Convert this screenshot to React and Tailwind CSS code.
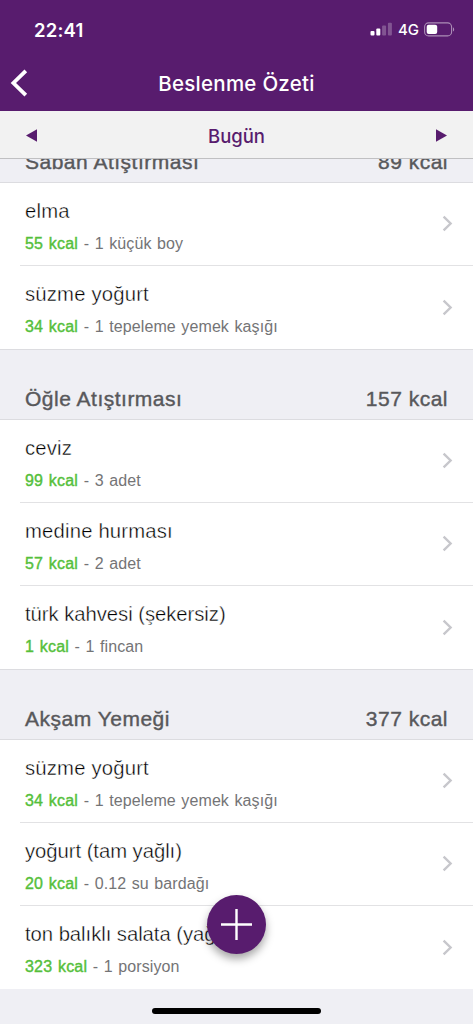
import React from "react";

const sections = [
  {
    name: "Sabah Atıştırması",
    total: "89 kcal",
    items: [
      { name: "elma", kcal: "55 kcal", amount: "1 küçük boy" },
      { name: "süzme yoğurt", kcal: "34 kcal", amount: "1 tepeleme yemek kaşığı" },
    ],
  },
  {
    name: "Öğle Atıştırması",
    total: "157 kcal",
    items: [
      { name: "ceviz", kcal: "99 kcal", amount: "3 adet" },
      { name: "medine hurması", kcal: "57 kcal", amount: "2 adet" },
      { name: "türk kahvesi (şekersiz)", kcal: "1 kcal", amount: "1 fincan" },
    ],
  },
  {
    name: "Akşam Yemeği",
    total: "377 kcal",
    items: [
      { name: "süzme yoğurt", kcal: "34 kcal", amount: "1 tepeleme yemek kaşığı" },
      { name: "yoğurt (tam yağlı)", kcal: "20 kcal", amount: "0.12 su bardağı" },
      { name: "ton balıklı salata (yağsız)", kcal: "323 kcal", amount: "1 porsiyon" },
    ],
  },
];

function StatusBar() {
  return (
    <div className="flex h-[58px] items-center justify-between pl-[34px] pr-[18px] text-white">
      <span className="pt-px font-['Inter',sans-serif] text-[18.5px] leading-6 font-semibold tracking-[0.2px]">22:41</span>
      <div className="flex items-center">
        <svg width="23" height="14" viewBox="0 0 23 14" fill="#fff">
          <rect x="0.5" y="9" width="4" height="4.5" rx="1" />
          <rect x="6.3" y="6.5" width="4" height="7" rx="1" />
          <rect x="12.1" y="3.5" width="4" height="10" rx="1" opacity="0.25" />
          <rect x="17.9" y="0.8" width="4" height="12.7" rx="1" opacity="0.25" />
        </svg>
        <span className="ml-[5px] w-[21px] pt-px font-['Inter',sans-serif] text-[15px] leading-5 font-medium tracking-[-0.2px]">4G</span>
        <svg className="ml-[5px]" width="31" height="15" viewBox="0 0 31 15" fill="none">
          <rect x="0.6" y="0.9" width="27" height="13" rx="4" stroke="#fff" strokeOpacity="0.5" strokeWidth="1.1" />
          <rect x="2.7" y="2.7" width="10.5" height="9.4" rx="2" fill="#fff" />
          <path d="M29 5.2c1.6.7 1.6 3.7 0 4.4z" fill="#fff" fillOpacity="0.5" />
        </svg>
      </div>
    </div>
  );
}

function NavBar() {
  return (
    <div className="grid h-[53px] grid-cols-[60px_1fr_60px] items-center pb-[3px]">
      <svg className="ml-[10px]" width="18" height="28" viewBox="0 0 18 28" fill="none" stroke="#fff" strokeWidth="3.8">
        <path d="M15.8 1.8 3.4 14l12.4 12.2" />
      </svg>
      <h1 className="pt-[2px] text-center font-['Inter',sans-serif] text-[20.5px] leading-7 font-medium tracking-[0.25px] whitespace-nowrap text-white">
        Beslenme Özeti
      </h1>
    </div>
  );
}

function DateBar() {
  return (
    <div className="flex h-12 items-center justify-between border-b border-[#c0c0c2] bg-[#f2f2f2] pr-[26px] pl-[26px]">
      <svg className="mt-px" width="11" height="13" viewBox="0 0 11 13" fill="#581c6e">
        <path d="M0 6.5 11 .3v12.4z" />
      </svg>
      <span className="pt-[2px] font-['Inter',sans-serif] text-[18.5px] leading-6 font-medium text-[#581c6e]">Bugün</span>
      <svg className="mt-px" width="11" height="13" viewBox="0 0 11 13" fill="#581c6e">
        <path d="M11 6.5 0 .3v12.4z" />
      </svg>
    </div>
  );
}

function SectionHeader({ name, total, clipped }) {
  return (
    <div
      className={`flex items-end justify-between overflow-hidden border-b border-[#dcdce0] bg-[#efeff4] pr-[25px] pb-[6px] pl-[25px] text-[21px] leading-7 text-[#58585b] [-webkit-text-stroke:0.4px_#58585b] ${
        clipped ? "h-6" : "h-[71px] border-t"
      }`}
    >
      <h2 className="tracking-[0.5px] whitespace-nowrap">{name}</h2>
      <span className="tracking-[0.5px] whitespace-nowrap">{total}</span>
    </div>
  );
}

function Row({ item, last }) {
  const spacing = item.name.includes("(") ? "tracking-[-0.05px]" : "tracking-[0.18px]";
  return (
    <li className="h-[83px] pl-5">
      <div className={`flex h-full items-center justify-between pr-[20px] pl-[5px] ${last ? "" : "border-b border-[#e2e2e4]"}`}>
        <div className="pt-[3px]">
          <p className={`text-[20.3px] leading-7 whitespace-nowrap text-black [-webkit-text-stroke:0.4px_white] ${spacing}`}>{item.name}</p>
          <p className="mt-[8px] text-[16px] leading-[22px] tracking-[0.1px] whitespace-nowrap text-[#747476] [word-spacing:1px]">
            <span className="tracking-[0.2px] text-[#55bf3b] [-webkit-text-stroke:0.4px_#55bf3b]">{item.kcal}</span> - {item.amount}
          </p>
        </div>
        <svg className="mb-px" width="11" height="17" viewBox="0 0 11 17" fill="none" stroke="#c7c7cc" strokeWidth="2.4">
          <path d="M1.6 1.6 8.6 8.5l-7 6.9" />
        </svg>
      </div>
    </li>
  );
}

export default function App() {
  return (
    <div className="relative flex h-[1024px] w-[473px] flex-col overflow-hidden bg-[#efeff4] font-['Liberation_Sans',Arial,sans-serif]">
      <header className="h-[111px] shrink-0 bg-[#581c6e]">
        <StatusBar />
        <NavBar />
      </header>
      <DateBar />
      <main>
        {sections.map((section, i) => (
          <section key={section.name}>
            <SectionHeader name={section.name} total={section.total} clipped={i === 0} />
            <ul className="bg-white">
              {section.items.map((item, j) => (
                <Row key={item.name} item={item} last={j === section.items.length - 1} />
              ))}
            </ul>
          </section>
        ))}
      </main>
      <button
        aria-label="Ekle"
        className="absolute top-[895px] left-[207px] flex h-[59px] w-[59px] items-center justify-center rounded-full bg-[#581c6e] shadow-[0_5px_8px_rgba(0,0,0,0.35)]"
      >
        <svg width="31" height="31" viewBox="0 0 31 31" stroke="#fff" strokeWidth="2.4">
          <path d="M0 15.5h31M15.5 0v31" />
        </svg>
      </button>
      <div className="absolute bottom-[10px] left-[152px] h-[6px] w-[169px] rounded-full bg-black" />
    </div>
  );
}
